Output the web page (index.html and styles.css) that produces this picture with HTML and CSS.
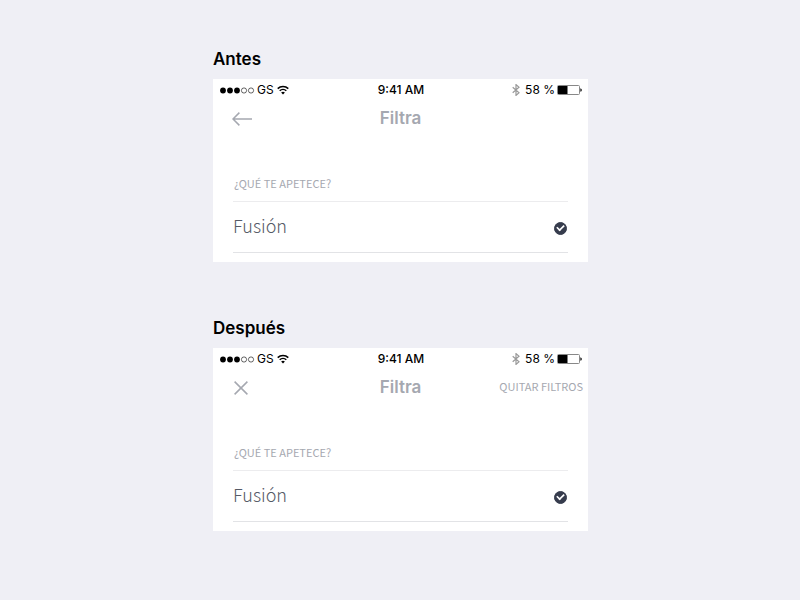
FILE: index.html
```html
<!DOCTYPE html>
<html lang="es">
<head>
    <meta charset="UTF-8">
    <meta name="viewport" content="width=device-width, initial-scale=1.0">
    <title>Filtra - Antes y después</title>
    <link rel="stylesheet" href="styles.css">
</head>
<body>
    <!-- Shared icons -->
    <svg class="sprite" aria-hidden="true">
        <symbol id="signal" viewBox="0 0 35 8">
            <circle cx="3" cy="4.5" r="2.9"/>
            <circle cx="10" cy="4.5" r="2.9"/>
            <circle cx="17" cy="4.5" r="2.9"/>
            <g fill="none" stroke="#000" stroke-width="0.6">
                <circle cx="24" cy="4.5" r="2.6"/>
                <circle cx="31" cy="4.5" r="2.6"/>
            </g>
        </symbol>
        <symbol id="wifi" viewBox="0 0 12 10">
            <path d="M0.7 3.6a7.6 7.6 0 0 1 10.6 0M2.7 5.7a4.8 4.8 0 0 1 6.6 0" fill="none" stroke="#000" stroke-width="1.5"/>
            <path d="M6 9.6L4.1 7.6a2.8 2.8 0 0 1 3.8 0z"/>
        </symbol>
        <symbol id="bluetooth" viewBox="0 0 8 12">
            <path d="M0.7 3.2L7 8.7 4 11.4V0.6L7 3.3 0.7 8.8" fill="none" stroke="#999" stroke-width="1.2"/>
        </symbol>
        <symbol id="battery" viewBox="0 0 25 10">
            <rect x="0.5" y="0.5" width="22" height="9" rx="1" fill="none" stroke="#888"/>
            <rect x="1" y="1" width="9.5" height="8"/>
            <path d="M23.4 3.2q1.4 0.4 1.4 1.8t-1.4 1.8z"/>
        </symbol>
        <symbol id="arrow" viewBox="0 0 20 14">
            <path d="M20 7H1M7.4 0.6L1 7l6.4 6.4" fill="none" stroke="#a5a8b0" stroke-width="1.5"/>
        </symbol>
        <symbol id="close" viewBox="0 0 14 14">
            <path d="M0.6 0.6l12.8 12.8M13.4 0.6L0.6 13.4" fill="none" stroke="#a5a8b0" stroke-width="1.5"/>
        </symbol>
    </svg>

    <main class="container">
        <section class="version">
            <h1>Antes</h1>
            <div class="screen">
                <div class="status-bar">
                    <div class="carrier">
                        <svg class="signal"><use href="#signal"/></svg>
                        <span>GS</span>
                        <svg class="wifi"><use href="#wifi"/></svg>
                    </div>
                    <div class="time">9:41 AM</div>
                    <div class="power">
                        <svg class="bluetooth"><use href="#bluetooth"/></svg>
                        <span>58 %</span>
                        <svg class="battery"><use href="#battery"/></svg>
                    </div>
                </div>
                <header class="nav">
                    <button class="nav-btn" aria-label="Volver"><svg class="arrow"><use href="#arrow"/></svg></button>
                    <h2>Filtra</h2>
                </header>
                <fieldset class="filters">
                    <legend>¿QUÉ TE APETECE?</legend>
                    <label class="option">
                        <span>Fusión</span>
                        <input type="checkbox" class="check" checked>
                    </label>
                </fieldset>
            </div>
        </section>

        <section class="version">
            <h1>Después</h1>
            <div class="screen">
                <div class="status-bar">
                    <div class="carrier">
                        <svg class="signal"><use href="#signal"/></svg>
                        <span>GS</span>
                        <svg class="wifi"><use href="#wifi"/></svg>
                    </div>
                    <div class="time">9:41 AM</div>
                    <div class="power">
                        <svg class="bluetooth"><use href="#bluetooth"/></svg>
                        <span>58 %</span>
                        <svg class="battery"><use href="#battery"/></svg>
                    </div>
                </div>
                <header class="nav">
                    <button class="nav-btn nav-close" aria-label="Cerrar"><svg class="close"><use href="#close"/></svg></button>
                    <h2>Filtra</h2>
                    <button class="nav-btn clear-btn">QUITAR FILTROS</button>
                </header>
                <fieldset class="filters">
                    <legend>¿QUÉ TE APETECE?</legend>
                    <label class="option">
                        <span>Fusión</span>
                        <input type="checkbox" class="check" checked>
                    </label>
                </fieldset>
            </div>
        </section>
    </main>
</body>
</html>
```
FILE: styles.css
```css
* {
    box-sizing: border-box;
}
body {
    font-family: Inter, "Liberation Sans", sans-serif;
    margin: 0;
    padding: 48px 0 48px 1px;
    background: #efeff5;
    color: #000;
}
svg {
    display: block;
}
.sprite {
    display: none;
}
.container {
    max-width: 375px;
    margin: 0 auto;
    display: flex;
    flex-direction: column;
    gap: 55px;
}
h1 {
    font-size: 17px;
    font-weight: 600;
    line-height: 22px;
    margin: 0 0 9px;
}
.screen {
    background: white;
    padding-bottom: 9px;
}
.status-bar {
    display: grid;
    grid-template-columns: 1fr auto 1fr;
    align-items: center;
    height: 21px;
    padding: 0 6px 0 7px;
    font-size: 12px;
    line-height: 21px;
}
.carrier, .power {
    display: flex;
    align-items: center;
    gap: 2px;
}
.power {
    justify-content: flex-end;
}
.time {
    font-weight: 500;
}
.signal {
    width: 35px;
    height: 8px;
}
.wifi {
    width: 12px;
    height: 10px;
    margin-left: 1px;
}
.bluetooth {
    width: 8px;
    height: 12px;
    margin-right: 3px;
}
.battery {
    width: 25px;
    height: 10px;
}
.nav {
    display: grid;
    grid-template-columns: 1fr auto 1fr;
    align-items: center;
    height: 37px;
    padding: 0 5px 0 19px;
    color: #a5a8b0;
}
.nav h2 {
    grid-column: 2;
    font-size: 17px;
    font-weight: 600;
    line-height: 20px;
    margin: 0 14px 0 0;
    padding-bottom: 1px;
}
.nav-btn {
    padding: 0;
    border: none;
    background: none;
    color: inherit;
    cursor: pointer;
    justify-self: start;
}
.nav-close {
    padding-left: 2px;
}
.clear-btn {
    justify-self: end;
    padding-bottom: 3px;
    font-family: "Noto Sans CJK JP", "Noto Sans", sans-serif;
    font-size: 11px;
    line-height: 20px;
}
.arrow {
    width: 20px;
    height: 14px;
}
.close {
    width: 14px;
    height: 14px;
}
.filters {
    margin: 36px 20px 0;
    padding: 0;
    border: none;
    font-family: "Noto Sans CJK JP", "Noto Sans", sans-serif;
}
.filters legend {
    padding: 0 0 8px 1px;
    color: #a5a8b0;
    font-size: 11px;
    line-height: 20px;
}
.option {
    display: flex;
    align-items: center;
    justify-content: space-between;
    height: 52px;
    padding: 2px 1px 0 0;
    border-top: 1px solid #ececee;
    border-bottom: 1px solid #e2e3e6;
    color: #555a66;
    font-size: 18px;
    font-weight: 300;
    line-height: 20px;
}
.option span {
    padding-bottom: 6px;
}
.check {
    appearance: none;
    width: 13px;
    height: 13px;
    margin: 0;
    border: 1px solid #363c4d;
    border-radius: 50%;
    display: grid;
    place-items: center;
}
.check:checked {
    background: #363c4d;
}
.check:checked::before {
    content: "";
    width: 7px;
    height: 4px;
    margin-bottom: 2px;
    border: solid white;
    border-width: 0 0 2px 2px;
    transform: rotate(-45deg) scale(0.8);
}
```
